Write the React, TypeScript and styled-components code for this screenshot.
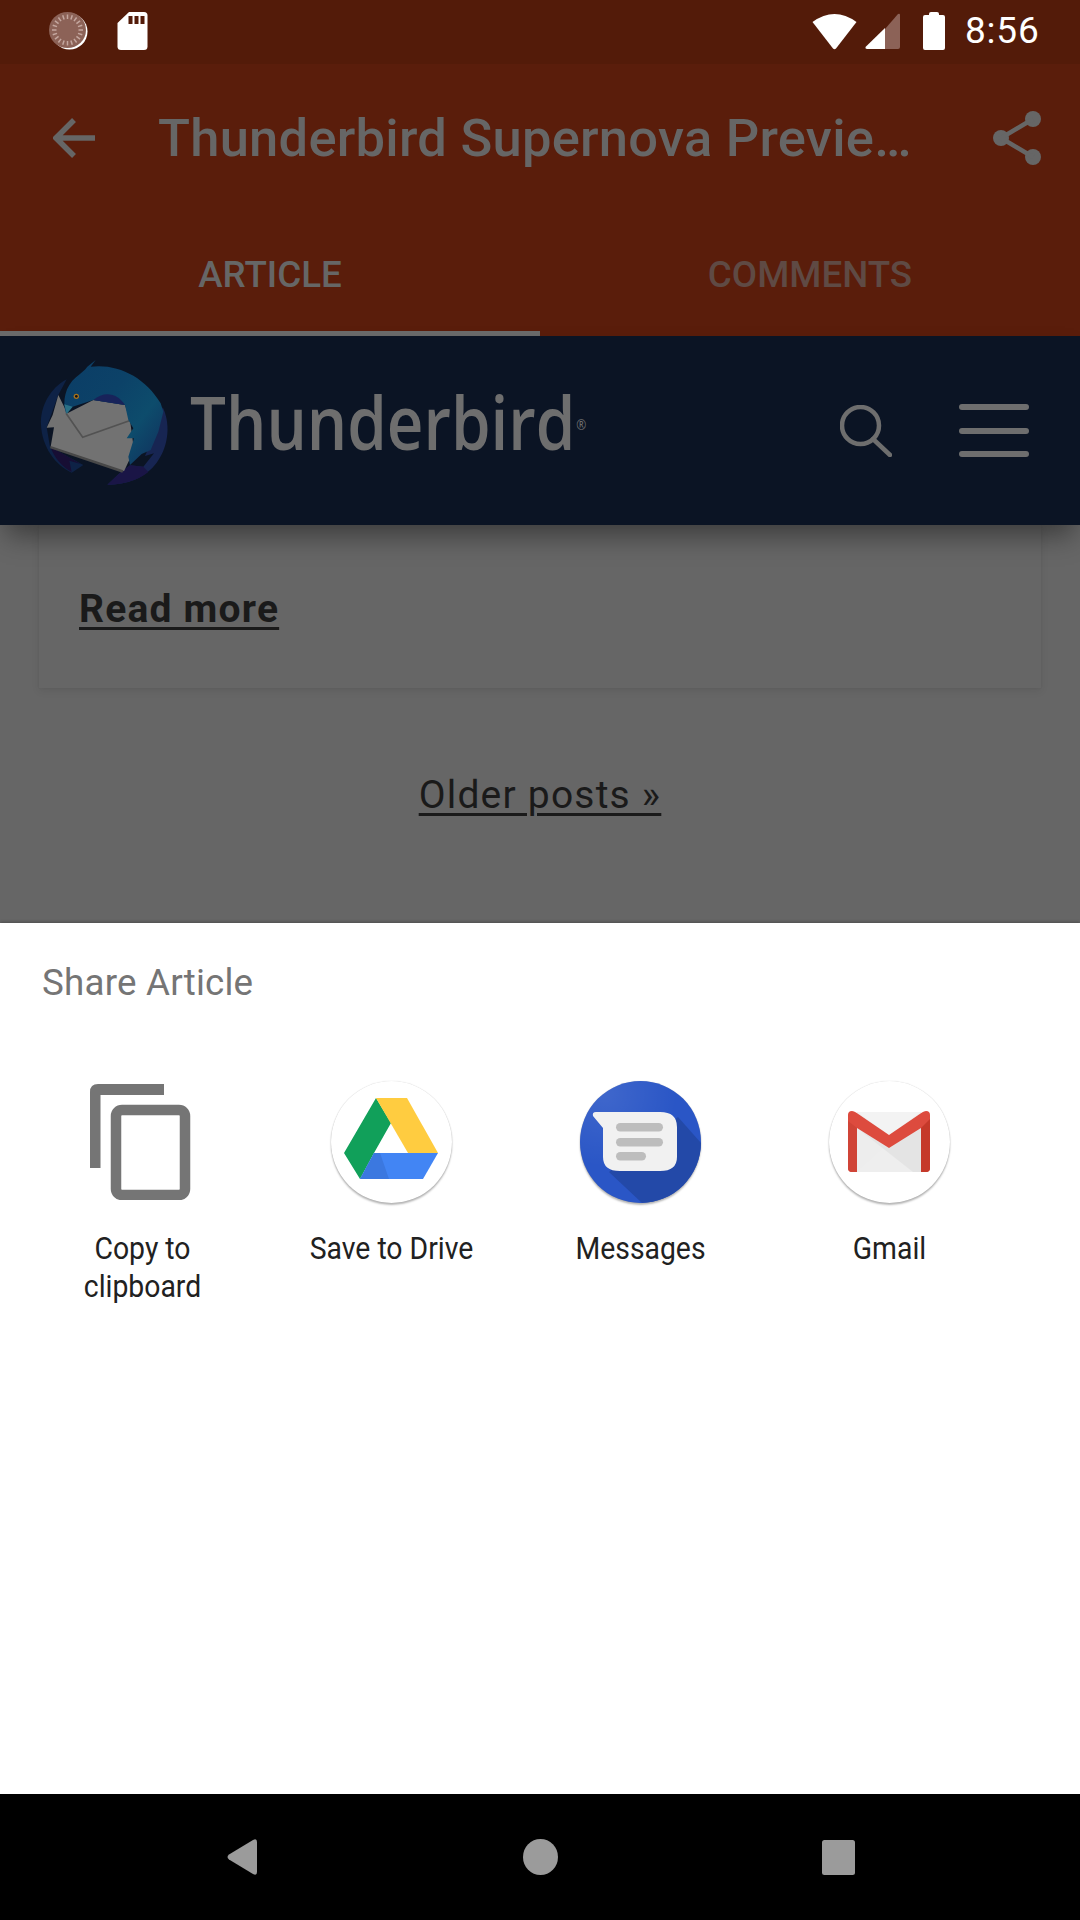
import React from "react";
import styled, { createGlobalStyle } from "styled-components";

const Global = createGlobalStyle`
  html, body { margin: 0; padding: 0; background: #000; }
  body { font-family: Roboto, "Liberation Sans", sans-serif; }
`;

const Screen = styled.div`
  width: 1080px;
  height: 1920px;
  display: flex;
  flex-direction: column;
  overflow: hidden;
  background: #666;
`;

const StatusBar = styled.div`
  height: 64px;
  flex: none;
  background: #531b09;
  display: flex;
  align-items: center;
  justify-content: space-between;
  padding: 0 42px 2px 49px;
  box-sizing: border-box;
`;
const StatusGroup = styled.div`
  display: flex;
  align-items: center;
`;
const StatusIcon = styled.svg<{ $ml?: number }>`
  display: block;
  flex: none;
  margin-left: ${(p) => p.$ml ?? 0}px;
`;
const Clock = styled.span`
  margin-left: 20px;
  font-size: 37px;
  line-height: 40px;
  letter-spacing: 0.8px;
  color: #fff;
  width: 73px;
  white-space: nowrap;
`;

const AppBar = styled.div`
  height: 272px;
  flex: none;
  background: #5a1d0b;
  display: flex;
  flex-direction: column;
`;
const Toolbar = styled.div`
  height: 148px;
  display: flex;
  align-items: center;
  padding: 0 39px 0 53px;
  flex: none;
`;
const Title = styled.div`
  margin-left: 63px;
  flex: 1;
  font-size: 52.5px;
  font-weight: 500;
  letter-spacing: 0.25px;
  color: #666;
  white-space: nowrap;
`;
const TabRow = styled.div`
  flex: 1;
  display: flex;
`;
const Tab = styled.div<{ $active?: boolean }>`
  flex: 1;
  display: flex;
  align-items: center;
  justify-content: center;
  padding-top: 6px;
  font-size: 36.75px;
  font-weight: 500;
  color: ${(p) => (p.$active ? "#666" : "#5f4a44")};
  border-bottom: 5px solid ${(p) => (p.$active ? "#6b6b6b" : "transparent")};
`;

const SiteHeader = styled.div`
  height: 189px;
  flex: none;
  background: #0b1424;
  display: flex;
  align-items: center;
  padding: 0 50px 0 30px;
  position: relative;
  z-index: 2;
  box-shadow: 0 16px 26px -6px rgba(0, 0, 0, 0.42);
`;
const Logo = styled.svg`
  display: block;
  flex: none;
  margin-bottom: 11px;
`;
const WordMark = styled.div`
  margin-left: 10px;
  flex: 1;
  font-family: "Open Sans", "Noto Sans", sans-serif;
  font-size: 74px;
  font-weight: 600;
  line-height: 90px;
  color: #6e6e6e;
  white-space: nowrap;
  transform: scaleX(0.86);
  transform-origin: left center;
  margin-bottom: 14px;
`;
const Reg = styled.span`
  font-size: 14px;
  font-weight: 400;
  vertical-align: 20px;
  margin-left: 1px;
`;

const Content = styled.div`
  flex: 1;
  background: #666;
  display: flex;
  flex-direction: column;
  align-items: center;
  overflow: hidden;
`;
const Card = styled.div`
  align-self: stretch;
  margin: 0 39px;
  height: 163px;
  box-sizing: border-box;
  padding: 62px 40px 0;
  background: #666;
  box-shadow: 0 3px 8px rgba(0, 0, 0, 0.08), 0 0 2px rgba(0, 0, 0, 0.07);
`;
const ReadMore = styled.a`
  font-size: 39px;
  line-height: 44px;
  font-weight: 700;
  letter-spacing: 1.2px;
  color: #1a1a1a;
  text-decoration: underline;
  text-underline-offset: 5px;
  text-decoration-thickness: 3px;
`;
const Older = styled.a`
  margin-top: 85px;
  font-size: 39px;
  line-height: 44px;
  letter-spacing: 1.2px;
  color: #1a1a1a;
  text-decoration: underline;
  text-underline-offset: 5px;
  text-decoration-thickness: 3px;
`;

const Sheet = styled.div`
  height: 871px;
  flex: none;
  background: #fff;
  box-shadow: 0 -1px 3px rgba(0, 0, 0, 0.25);
  position: relative;
  z-index: 1;
`;
const SheetTitle = styled.div`
  padding: 37px 0 0 42px;
  font-size: 36.75px;
  letter-spacing: 0.2px;
  line-height: 46px;
  color: #757575;
  height: 122px;
  box-sizing: border-box;
`;
const TargetGrid = styled.div`
  display: grid;
  grid-template-columns: repeat(4, 249px);
  padding: 36px 0 0 18px;
`;
const Tile = styled.div`
  display: flex;
  flex-direction: column;
  align-items: center;
`;
const IconSlot = styled.div`
  height: 122px;
  display: flex;
  align-items: center;
  justify-content: center;
`;
const CopyArt = styled.svg`
  display: block;
  margin-right: 5px;
`;
const Badge = styled.div<{ $bg?: string }>`
  width: 121px;
  height: 122px;
  border-radius: 50%;
  background: ${(p) => p.$bg ?? "#fff"};
  box-shadow: 0 2px 2px rgba(0, 0, 0, 0.28), 0 0 1px rgba(0, 0, 0, 0.22);
  overflow: hidden;
`;
const BadgeArt = styled.svg`
  display: block;
`;
const Label = styled.div`
  margin-top: 27px;
  width: 249px;
  text-align: center;
  font-size: 31.5px;
  line-height: 37.5px;
  color: #212121;
  transform: scaleX(0.9);
`;

const NavBar = styled.div`
  height: 126px;
  flex: none;
  background: #000;
  display: grid;
  grid-template-columns: repeat(3, 298.5px);
  justify-content: center;
  align-items: center;
  z-index: 2;
`;
const NavButton = styled.div`
  display: flex;
  justify-content: center;
  align-items: center;
`;
const NavArt = styled.svg`
  display: block;
`;

const App = () => (
  <Screen>
    <Global />
    <StatusBar>
      <StatusGroup>
        <StatusIcon width="40" height="38" viewBox="0 0 40 38">
          <ellipse cx="20.5" cy="19.5" rx="18" ry="18" fill="#fff" />
          <ellipse cx="18.5" cy="18" rx="18.5" ry="18" fill="#8c6257" />
          {Array.from({ length: 20 }).map((_, i) => {
            const a = (i * Math.PI) / 10;
            return (
              <line
                key={i}
                x1={18.5 + Math.cos(a) * 11}
                y1={18 + Math.sin(a) * 11}
                x2={18.5 + Math.cos(a) * 15.5}
                y2={18 + Math.sin(a) * 15.5}
                stroke="#c4a79f"
                strokeWidth="1.5"
              />
            );
          })}
        </StatusIcon>
        <StatusIcon $ml={28} width="31" height="38" viewBox="0 0 31 38">
          <path
            d="M12 0H27Q30.5 0 30.5 3.5V34.5Q30.5 38 27 38H4Q0.5 38 0.5 34.5V11Z"
            fill="#fff"
          />
          <rect x="11.5" y="4" width="4" height="8" fill="#531b09" />
          <rect x="17.5" y="4" width="4" height="8" fill="#531b09" />
          <rect x="23.5" y="4" width="4" height="8" fill="#531b09" />
        </StatusIcon>
      </StatusGroup>
      <StatusGroup>
        <StatusIcon width="45" height="37" viewBox="0 0 45 37">
          <path
            d="M0.5 9Q22.5 -7 44.5 9L24 35.5Q22.5 37 21 35.5Z"
            fill="#fff"
          />
        </StatusIcon>
        <StatusIcon $ml={8} width="35" height="36" viewBox="0 0 35 36">
          <path d="M20 16V36H33Q35 36 35 34V2Q35 0 33 1Z" fill="#8c6257" />
          <path d="M20 15L0.5 34Q0 36 2 36H20Z" fill="#fff" />
        </StatusIcon>
        <StatusIcon $ml={23} width="22" height="38" viewBox="0 0 22 38">
          <path
            d="M6 2Q6 0 8 0H14Q16 0 16 2V3H20Q22 3 22 5V36Q22 38 20 38H2Q0 38 0 36V5Q0 3 2 3H6Z"
            fill="#fff"
          />
        </StatusIcon>
        <Clock>8:56</Clock>
      </StatusGroup>
    </StatusBar>

    <AppBar>
      <Toolbar>
        <StatusIcon width="42" height="42" viewBox="0 0 42 42">
          <path
            d="M21 3L3 21L21 39M3 21H42"
            fill="none"
            stroke="#666"
            strokeWidth="5.5"
          />
        </StatusIcon>
        <Title>Thunderbird Supernova Previe…</Title>
        <StatusIcon width="48" height="54" viewBox="0 0 48 54">
          <g fill="#666">
            <ellipse cx="40" cy="8" rx="8" ry="8" />
            <ellipse cx="8" cy="27" rx="8" ry="8" />
            <ellipse cx="40" cy="46" rx="8" ry="8" />
          </g>
          <path d="M40 8L8 27L40 46" fill="none" stroke="#666" strokeWidth="4.5" />
        </StatusIcon>
      </Toolbar>
      <TabRow>
        <Tab $active>ARTICLE</Tab>
        <Tab>COMMENTS</Tab>
      </TabRow>
    </AppBar>

    <SiteHeader>
      <Logo width="150" height="150" viewBox="0 0 450 450">
        <defs>
          <linearGradient id="tbWing" x1="0" y1="0" x2="1" y2="0.8">
            <stop offset="0" stopColor="#0b3d66" />
            <stop offset="0.45" stopColor="#0c4268" />
            <stop offset="0.75" stopColor="#0d4c6c" />
            <stop offset="1" stopColor="#103660" />
          </linearGradient>
        </defs>
        <path
          d="M110 88C60 115 30 170 33 225C36 290 75 345 125 368L160 345L60 290L50 232L85 135Z"
          fill="#0e2246"
        />
        <path d="M62 292C72 322 95 350 125 366L118 332L152 342L100 312Z" fill="#170e34" />
        <path
          d="M398 172C420 215 420 285 380 338C345 385 290 404 232 404L270 368L300 346L340 350L372 310L345 318L370 260Z"
          fill="#172552"
        />
        <path d="M300 346L270 368L232 404C275 404 320 394 355 366L340 350Z" fill="#1a1546" />
        <path
          d="M85 135L112 190L190 150L285 165L300 210L312 300L282 364L62 290L72 232L50 233L68 195Z"
          fill="#727272"
        />
        <path d="M62 288L280 361L277 368L60 295Z" fill="#484848" />
        <path d="M108 190L158 262L298 212" fill="none" stroke="#525252" strokeWidth="5" />
        <path
          d="M108 190C96 155 106 108 138 82C150 70 165 62 172 50L197 30L182 50C262 40 345 80 392 160L400 185L385 245L362 300L335 312L300 345L295 320L312 265L290 265L310 235L295 210L285 165L190 150L128 170Z"
          fill="url(#tbWing)"
        />
        <path d="M190 150C222 122 262 128 285 165Z" fill="#18235a" />
        <path d="M103 163L110 192L128 170Z" fill="#2a7086" />
        <ellipse cx="139" cy="139" rx="8" ry="8" fill="#a8721c" />
        <ellipse cx="139" cy="139" rx="4" ry="4" fill="#111" />
      </Logo>
      <WordMark>
        Thunderbird
        <Reg>®</Reg>
      </WordMark>
      <StatusIcon width="52" height="52" viewBox="0 0 52 52">
        <ellipse cx="20.5" cy="20.5" rx="18.5" ry="18.5" fill="none" stroke="#6e6e6e" strokeWidth="4.5" />
        <path d="M33 34L50 50" stroke="#6e6e6e" strokeWidth="4.5" strokeLinecap="round" />
      </StatusIcon>
      <StatusIcon $ml={67} width="71" height="54" viewBox="0 0 71 54">
        <g fill="#6e6e6e">
          <rect x="0" y="0" width="70" height="6" rx="3" />
          <rect x="0" y="24" width="70" height="6" rx="3" />
          <rect x="0" y="47" width="70" height="6" rx="3" />
        </g>
      </StatusIcon>
    </SiteHeader>

    <Content>
      <Card>
        <ReadMore>Read more</ReadMore>
      </Card>
      <Older>Older posts »</Older>
    </Content>

    <Sheet>
      <SheetTitle>Share Article</SheetTitle>
      <TargetGrid>
        <Tile>
          <IconSlot>
            <CopyArt width="101" height="116" viewBox="0 0 101 116">
              <path d="M74 0H8Q0 0 0 8V84H10.5V11H74Z" fill="#757575" />
              <rect x="26" y="26" width="69" height="85" rx="6" fill="none" stroke="#757575" strokeWidth="10.5" />
            </CopyArt>
          </IconSlot>
          <Label>
            Copy to
            <br />
            clipboard
          </Label>
        </Tile>
        <Tile>
          <IconSlot>
            <Badge>
              <BadgeArt width="121" height="122" viewBox="0 0 121 122">
                <path d="M45 17L60 42L43 72L29 98L13 72Z" fill="#11a05a" />
                <path d="M45 17H76L107 72H77Z" fill="#ffcc40" />
                <path d="M43 72H107L92 98H29Z" fill="#4285f4" />
                <path d="M43 72L29 98H58L49 72Z" fill="#3b78e0" />
              </BadgeArt>
            </Badge>
          </IconSlot>
          <Label>Save to Drive</Label>
        </Tile>
        <Tile>
          <IconSlot>
            <Badge $bg="#2a56c6">
              <BadgeArt width="121" height="122" viewBox="0 0 121 122">
                <defs>
                  <radialGradient id="msgGlow" cx="0.2" cy="0.1" r="0.6">
                    <stop offset="0" stopColor="#fff" stopOpacity="0.1" />
                    <stop offset="1" stopColor="#fff" stopOpacity="0" />
                  </radialGradient>
                </defs>
                <rect width="121" height="122" fill="url(#msgGlow)" />
                <path d="M98 36L121 62V122H62L29 91Z" fill="#2349a8" />
                <path
                  d="M16 31H80Q97 31 97 46V76Q97 90 80 90H40Q23 90 23 76V47L13 35Q12 31 16 31Z"
                  fill="#f1f1f1"
                />
                <g fill="#bdbdbd">
                  <rect x="36" y="42" width="47" height="8.5" rx="4.2" />
                  <rect x="36" y="57" width="47" height="8.5" rx="4.2" />
                  <rect x="36" y="71" width="30" height="8.5" rx="4.2" />
                </g>
              </BadgeArt>
            </Badge>
          </IconSlot>
          <Label>Messages</Label>
        </Tile>
        <Tile>
          <IconSlot>
            <Badge>
              <BadgeArt width="121" height="122" viewBox="0 0 121 122">
                <rect x="28" y="31" width="64" height="60" fill="#ededed" />
                <path d="M28 91L60 62L92 91Z" fill="#eeeeee" />
                <path d="M28 47L60 67L92 47V91H84L28 47Z" fill="#e4e4e4" />
                <path d="M28 31H92L60 54Z" fill="#f3f3f3" />
                <path
                  d="M19 34Q19 30 23 30Q25 30 27 31.5L60 54L93 31.5Q95 30 97 30Q101 30 101 34V87Q101 91 97 91H92V47L60 67L28 47V91H23Q19 91 19 87Z"
                  fill="#dd4b3e"
                />
                <path d="M92 47L101 38V87Q101 91 97 91H92Z" fill="#c5392a" />
                <path d="M19 40L28 47V91H23Q19 91 19 87Z" fill="#d04437" />
              </BadgeArt>
            </Badge>
          </IconSlot>
          <Label>Gmail</Label>
        </Tile>
      </TargetGrid>
    </Sheet>

    <NavBar>
      <NavButton>
        <NavArt width="30" height="36" viewBox="0 0 30 36">
          <path d="M2 15.5L26 1Q30 -1 30 3V33Q30 37 26 35L2 20.5Q-1 18 2 15.5Z" fill="#9b9b9b" />
        </NavArt>
      </NavButton>
      <NavButton>
        <NavArt width="35" height="36" viewBox="0 0 35 36">
          <ellipse cx="17.5" cy="18" rx="17.5" ry="18" fill="#9b9b9b" />
        </NavArt>
      </NavButton>
      <NavButton>
        <NavArt width="33" height="35" viewBox="0 0 33 35">
          <rect width="33" height="35" rx="2.5" fill="#9b9b9b" />
        </NavArt>
      </NavButton>
    </NavBar>
  </Screen>
);

export default App;
